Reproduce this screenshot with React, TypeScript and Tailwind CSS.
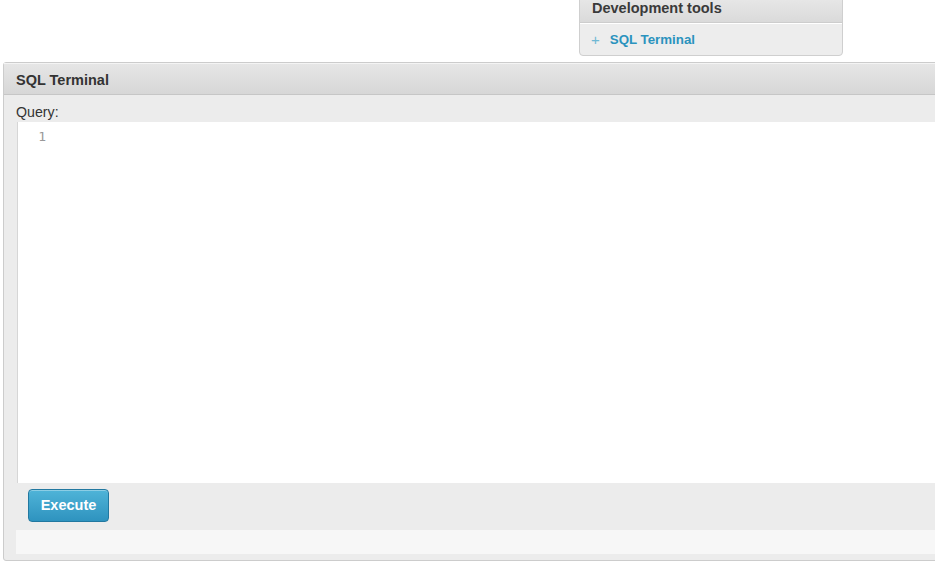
import React from "react";

export default function App() {
  return (
    <div className="w-[935px] h-[562px] overflow-hidden bg-white text-[#333]" style={{ fontFamily: '"Liberation Sans", Arial, sans-serif' }}>
      {/* Development tools box */}
      <div className="ml-[579px] w-[264px] mt-[-11px] border border-[#cfcfcf] rounded-b-[4px] bg-[#ededed] overflow-hidden">
        <div className="h-[33px] pt-[10px] pl-[12px] bg-gradient-to-b from-[#ececec] to-[#dadada] border-b border-[#cdcdcd] text-[14.5px] font-bold leading-[16px] text-[#3a3a3a]">
          Development tools
        </div>
        <div className="h-[32px] flex items-center pl-[11px] border-t border-white">
          <span className="text-[#6fb8d4] text-[15px] leading-none mr-[10px] font-light">+</span>
          <span className="text-[#2b93be] text-[13.3px] font-bold">SQL Terminal</span>
        </div>
      </div>

      {/* Panel */}
      <div className="ml-[3px] mt-[6px] w-[960px] border border-[#cccccc] rounded-[3px] bg-[#ececec]">
        <div className="h-[32px] pt-[8px] pl-[12px] leading-[17px] bg-gradient-to-b from-[#e6e6e6] to-[#d7d7d7] border-b border-[#c6c6c6] border-t border-t-[#f4f4f4] text-[14.5px] font-bold text-[#333]">
          SQL Terminal
        </div>
        <div className="pl-[12px] pb-[6px]">
          <div className="pt-[9px] h-[27px] text-[14.2px] leading-[17px] text-[#333]">Query:</div>
          <div className="h-[361px] bg-white border-l border-[#d6d6d6] ml-[1px] flex">
            <div className="w-[28px] text-right pt-[7px] text-[13px] leading-[16px] text-[#999]" style={{ fontFamily: '"DejaVu Sans Mono", "Liberation Mono", monospace' }}>
              1
            </div>
          </div>
          <div className="h-[47px] flex items-start pt-[6px] pl-[12px]">
            <button className="h-[33px] w-[81px] rounded-[4px] border border-[#2278a0] bg-gradient-to-b from-[#4fb4d8] to-[#2e93bf] text-white text-[14.5px] font-bold shadow-[inset_0_1px_0_rgba(255,255,255,0.35)]">
              Execute
            </button>
          </div>
          <div className="h-[24px] bg-[#f7f7f7]"></div>
        </div>
      </div>
    </div>
  );
}
